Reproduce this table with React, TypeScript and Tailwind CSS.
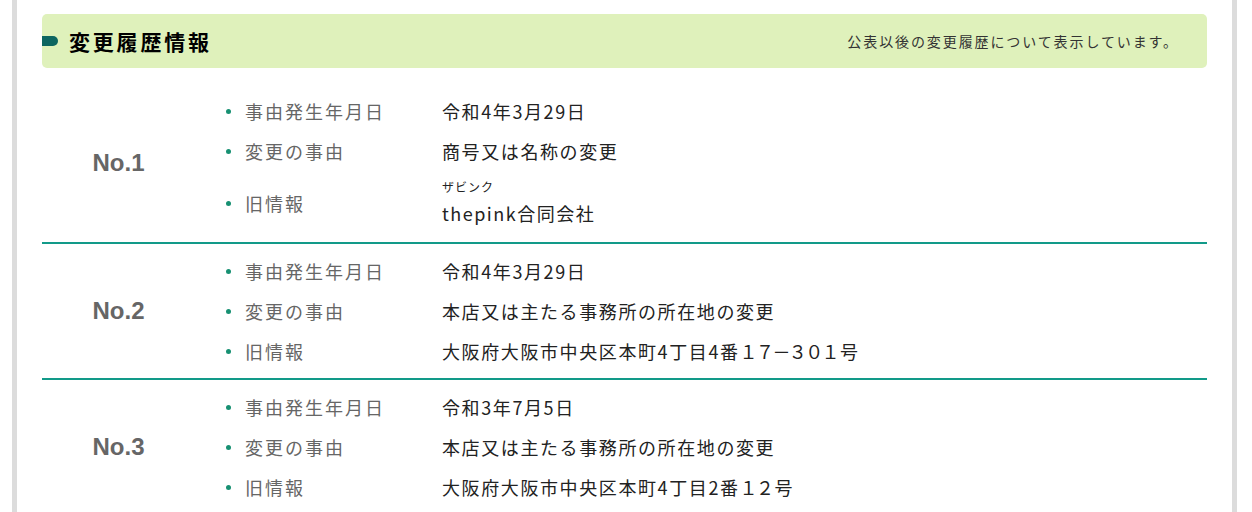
import React from "react";

type Item = { label: string; value: React.ReactNode; ruby?: string; tall?: boolean };

const FW = ({ children }: { children: React.ReactNode }) => (
  <span className="tracking-[-1.6px] mr-[2px]">{children}</span>
);

const rows: { no: string; items: Item[] }[] = [
  {
    no: "No.1",
    items: [
      { label: "事由発生年月日", value: "令和4年3月29日" },
      { label: "変更の事由", value: "商号又は名称の変更" },
      { label: "旧情報", value: "thepink合同会社", ruby: "ザビンク", tall: true },
    ],
  },
  {
    no: "No.2",
    items: [
      { label: "事由発生年月日", value: "令和4年3月29日" },
      { label: "変更の事由", value: "本店又は主たる事務所の所在地の変更" },
      {
        label: "旧情報",
        value: (
          <>
            大阪府大阪市中央区本町4丁目4番<FW>１７－３０１</FW>号
          </>
        ),
      },
    ],
  },
  {
    no: "No.3",
    items: [
      { label: "事由発生年月日", value: "令和3年7月5日" },
      { label: "変更の事由", value: "本店又は主たる事務所の所在地の変更" },
      {
        label: "旧情報",
        value: (
          <>
            大阪府大阪市中央区本町4丁目2番<FW>１２</FW>号
          </>
        ),
      },
    ],
  },
];

export default function App() {
  return (
    <div className="w-[1252px] h-[512px] overflow-hidden bg-white font-['Noto_Sans_CJK_JP','Noto_Sans',sans-serif]">
      <div className="ml-[12px] w-[1225px] h-full border-x-[5px] border-[#dcdcdc] px-[25px] pt-[14px]">
        <div className="h-[54px] rounded-[5px] bg-[#dff1bb] flex items-center justify-between">
          <div className="flex items-center">
            <div className="w-[16px] h-[10px] rounded-r-full bg-[#0d6660]" />
            <h2 className="ml-[11px] text-[21px] leading-[28px] font-bold tracking-[2.8px] text-black">
              変更履歴情報
            </h2>
          </div>
          <p className="pr-[28px] text-[14px] leading-[20px] tracking-[1.9px] text-[#333]">
            公表以後の変更履歴について表示しています。
          </p>
        </div>

        <div className="mt-[16px]">
          {rows.map((row, ri) => (
            <div
              key={row.no}
              className={
                ri < rows.length - 1
                  ? "flex pt-[7px] pb-[7px] border-b-2 border-[#129a89]"
                  : "flex pt-[7px] pb-[8px]"
              }
            >
              <div className="w-[153px] flex items-center justify-center">
                <span className="font-['Liberation_Sans',Arial,sans-serif] font-bold text-[24px] text-[#666]">
                  {row.no}
                </span>
              </div>
              <ul className="pl-[27px] flex-1">
                {row.items.map((it, i) => (
                  <li
                    key={i}
                    className={"flex items-center " + (it.tall ? "h-[64px]" : "h-[40px]")}
                  >
                    <span className="w-[23px] flex">
                      <span className="ml-[4px] w-[5px] h-[5px] rounded-full bg-[#179072]" />
                    </span>
                    <span className="w-[197px] text-[18px] leading-[24px] tracking-[2px] text-[#666]">
                      {it.label}
                    </span>
                    {it.ruby ? (
                      <div className="flex flex-col text-[#222]">
                        <span className="text-[12px] leading-[14px] tracking-[1px]">{it.ruby}</span>
                        <span className="mt-[6px] text-[18px] leading-[26px] tracking-[1.5px]">
                          {it.value}
                        </span>
                      </div>
                    ) : (
                      <span className="text-[18px] leading-[24px] tracking-[1.6px] text-[#222]">
                        {it.value}
                      </span>
                    )}
                  </li>
                ))}
              </ul>
            </div>
          ))}
        </div>
      </div>
    </div>
  );
}
